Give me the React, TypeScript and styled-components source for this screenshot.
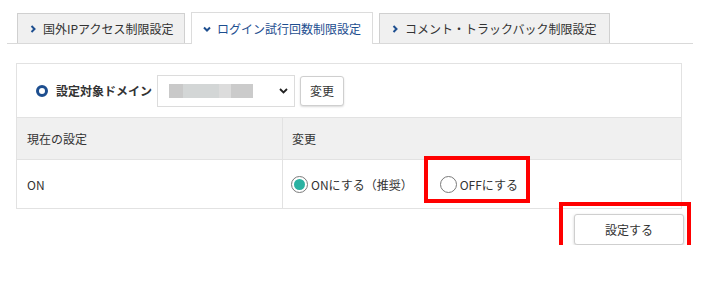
import React from 'react'
import styled, { createGlobalStyle } from 'styled-components'

const GlobalStyle = createGlobalStyle`
  body {
    margin: 0;
    background: #fff;
    color: #333;
    font-family: "Noto Sans CJK JP", "Noto Sans", sans-serif;
    font-size: 12px;
  }
`

const tabs = [
  { label: '国外IPアクセス制限設定', width: 168, active: false },
  { label: 'ログイン試行回数制限設定', width: 182, active: true },
  { label: 'コメント・トラックバック制限設定', width: 231, active: false },
]

const Chevron = ({ down }: { down?: boolean }) => (
  <svg width="8" height="8" viewBox="0 0 8 8">
    <polyline
      points={down ? '1,2.5 4,5.5 7,2.5' : '2.5,1 5.5,4 2.5,7'}
      fill="none"
      stroke="#1d4e8f"
      strokeWidth="2"
    />
  </svg>
)

const App = () => {
  return (
    <>
      <GlobalStyle />
      <TabBar>
        {tabs.map(t => (
          <Tab key={t.label} $active={t.active} $w={t.width}>
            <Chevron down={t.active} />
            <span>{t.label}</span>
          </Tab>
        ))}
      </TabBar>
      <Panel>
        <DomainRow>
          <Ring />
          <DomainLabel>設定対象ドメイン</DomainLabel>
          <Select>
            <Blurred />
            <svg width="9" height="6" viewBox="0 0 9 6">
              <polyline points="1,1 4.5,4.5 8,1" fill="none" stroke="#222" strokeWidth="1.8" />
            </svg>
          </Select>
          <SmallButton>変更</SmallButton>
        </DomainRow>
        <Table>
          <HeadCell>現在の設定</HeadCell>
          <HeadCell $last>変更</HeadCell>
          <BodyCell>ON</BodyCell>
          <BodyCell $last>
            <RadioLabel>
              <Radio $checked />
              ONにする（推奨）
            </RadioLabel>
            <RadioLabel $gap>
              <Radio />
              OFFにする
              <Mark $t={-20} $r={-12} $b={-10} $l={-16} />
            </RadioLabel>
          </BodyCell>
        </Table>
      </Panel>
      <Footer>
        <SubmitWrap>
          <SubmitButton>設定する</SubmitButton>
          <Mark $t={-12} $r={-7} $b={-11} $l={-15} />
        </SubmitWrap>
      </Footer>
    </>
  )
}

const TabBar = styled.div`
  display: flex;
  align-items: flex-end;
  gap: 6px;
  width: 686px;
  height: 32px;
  margin: 12px 0 0 7px;
  padding-left: 10px;
  box-sizing: border-box;
  border-bottom: 1px solid #d9d9d9;
`

const Tab = styled.div<{ $active: boolean; $w: number }>`
  display: flex;
  align-items: center;
  gap: 6px;
  width: ${p => p.$w}px;
  height: ${p => (p.$active ? 32 : 30)}px;
  margin-bottom: ${p => (p.$active ? -1 : 0)}px;
  padding-left: 11px;
  box-sizing: border-box;
  border: 1px solid ${p => (p.$active ? '#dcdcdc' : '#d0d0d0')};
  border-bottom: none;
  background: ${p => (p.$active ? '#fff' : '#f0f0f0')};
  color: ${p => (p.$active ? '#1d4e8f' : '#333')};
  font-size: 12px;
  white-space: nowrap;
`

const Panel = styled.div`
  width: 666px;
  margin: 19px 0 0 16px;
  border: 1px solid #e2e2e2;
  box-sizing: border-box;
`

const DomainRow = styled.div`
  display: flex;
  align-items: center;
  height: 53px;
  padding-left: 19px;
`

const Ring = styled.span`
  width: 12px;
  height: 12px;
  box-sizing: border-box;
  border: 3px solid #1d4e8f;
  border-radius: 50%;
`

const DomainLabel = styled.span`
  margin-left: 8px;
  font-weight: bold;
  white-space: nowrap;
`

const Select = styled.div`
  display: flex;
  align-items: center;
  justify-content: space-between;
  width: 138px;
  height: 32px;
  margin-left: 5px;
  padding: 0 6px 0 11px;
  box-sizing: border-box;
  border: 1px solid #dcdcdc;
  background: #fff;
`

const Blurred = styled.div`
  width: 84px;
  height: 14px;
  background: linear-gradient(
    to right,
    #c9c9c9 0 17%,
    #d3d6d6 17% 59%,
    #dcdcdc 59% 74%,
    #cbcbcb 74% 100%
  );
`

const SmallButton = styled.button`
  width: 44px;
  height: 30px;
  margin-left: 5px;
  border: 1px solid #cfcfcf;
  border-radius: 3px;
  background: #fff;
  box-shadow: 0 1px 2px rgba(0, 0, 0, 0.15);
  color: #333;
  font-family: inherit;
  font-size: 12px;
  padding: 0;
`

const Table = styled.div`
  display: grid;
  grid-template-columns: 266px 1fr;
`

const HeadCell = styled.div<{ $last?: boolean }>`
  display: flex;
  align-items: center;
  height: 43px;
  padding-left: ${p => (p.$last ? 9 : 10)}px;
  box-sizing: border-box;
  background: #f0f0f0;
  border-top: 1px solid #e2e2e2;
  border-bottom: 1px solid #e2e2e2;
  border-right: ${p => (p.$last ? 'none' : '1px solid #e2e2e2')};
`

const BodyCell = styled.div<{ $last?: boolean }>`
  display: flex;
  align-items: center;
  height: 48px;
  padding-left: ${p => (p.$last ? 8 : 10)}px;
  box-sizing: border-box;
  border-right: ${p => (p.$last ? 'none' : '1px solid #e2e2e2')};
`

const RadioLabel = styled.label<{ $gap?: boolean }>`
  position: relative;
  display: flex;
  align-items: center;
  gap: 3px;
  margin-left: ${p => (p.$gap ? 27 : 0)}px;
  font-size: 12px;
  white-space: nowrap;
`

const Radio = styled.span<{ $checked?: boolean }>`
  position: relative;
  width: 17px;
  height: 17px;
  box-sizing: border-box;
  border: 1px solid #7a7a7a;
  border-radius: 50%;
  background: #fff;

  &::after {
    content: '';
    display: ${p => (p.$checked ? 'block' : 'none')};
    position: absolute;
    inset: 2px;
    border-radius: 50%;
    background: #2bb2a2;
  }
`

const Mark = styled.span<{ $t: number; $r: number; $b: number; $l: number }>`
  position: absolute;
  top: ${p => p.$t}px;
  right: ${p => p.$r}px;
  bottom: ${p => p.$b}px;
  left: ${p => p.$l}px;
  border: 4px solid #f00;
  pointer-events: none;
`

const Footer = styled.div`
  display: flex;
  justify-content: flex-end;
  width: 668px;
  margin: 5px 0 0 16px;
`

const SubmitWrap = styled.div`
  position: relative;
`

const SubmitButton = styled.button`
  display: block;
  width: 110px;
  height: 31px;
  border: 1px solid #cfcfcf;
  border-radius: 3px;
  background: #fff;
  box-shadow: 0 1px 3px rgba(0, 0, 0, 0.18);
  color: #333;
  font-family: inherit;
  font-size: 12px;
  padding: 0;
`

export default App
